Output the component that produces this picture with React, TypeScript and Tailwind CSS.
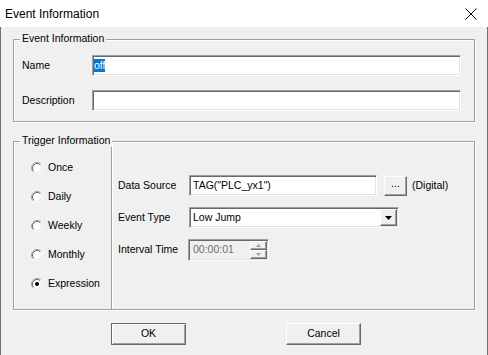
import React from 'react';

const sunken =
  'border border-t-[#a0a0a0] border-l-[#a0a0a0] border-r-white border-b-white shadow-[inset_1px_1px_0_#696969,inset_-1px_-1px_0_#e3e3e3]';
const raised =
  'border border-t-white border-l-white border-r-[#696969] border-b-[#696969] shadow-[inset_-1px_-1px_0_#a0a0a0] bg-[#f0f0f0]';

const Group: React.FC<{ title: string; className: string; children: React.ReactNode }> = ({ title, className, children }) => (
  <div className={`relative border border-[#a0a0a0] shadow-[inset_1px_1px_0_#fff,1px_1px_0_#fff] ${className}`}>
    <span className="absolute -top-[8px] left-[6px] bg-[#f0f0f0] px-[2px] leading-[13px]">{title}</span>
    {children}
  </div>
);

const Radio: React.FC<{ label: string; checked?: boolean }> = ({ label, checked }) => (
  <div className="flex h-[29px] items-center">
    <svg width="12" height="12" viewBox="0 0 12 12" className="shrink-0">
      <circle cx="6" cy="6" r="5" fill="#fff" />
      <path d="M2.11 9.89A5.5 5.5 0 0 1 9.89 2.11" fill="none" stroke="#a0a0a0" />
      <path d="M9.89 2.11A5.5 5.5 0 0 1 2.11 9.89" fill="none" stroke="#fff" />
      <path d="M2.82 9.18A4.5 4.5 0 0 1 9.18 2.82" fill="none" stroke="#696969" />
      <path d="M9.18 2.82A4.5 4.5 0 0 1 2.82 9.18" fill="none" stroke="#e3e3e3" />
      {checked && <circle cx="6" cy="6" r="2" fill="#000" />}
    </svg>
    <span className="ml-[5px]">{label}</span>
  </div>
);

export default function App() {
  return (
    <div className="flex h-[355px] w-[488px] flex-col font-['Liberation_Sans',Arial,sans-serif] text-[10.5px] text-black">
      {/* title bar */}
      <div className="flex h-[27px] shrink-0 items-center bg-white pl-[5px] text-[12px]">
        <span>Event Information</span>
        <svg width="12" height="12" viewBox="0 0 12 12" className="ml-auto mr-[11px]">
          <path d="M0.5 0.5L11.5 11.5M11.5 0.5L0.5 11.5" stroke="#000" strokeWidth="1" />
        </svg>
      </div>

      <div className="flex flex-1 flex-col border-x border-[#707070] bg-[#f0f0f0]">
        <Group title="Event Information" className="ml-[12px] mt-[12px] h-[83px] w-[462px]">
          <div className="flex flex-col gap-[14px] pl-[8px] pt-[15px]">
            <div className="flex h-[21px] items-center">
              <span className="w-[70px]">Name</span>
              <div className={`${sunken} flex h-[21px] w-[369px] items-center bg-white pl-[1px]`}>
                <span className="bg-[#0078d7] leading-[13px] text-white">off</span>
              </div>
            </div>
            <div className="flex h-[21px] items-center">
              <span className="w-[70px]">Description</span>
              <div className={`${sunken} h-[21px] w-[369px] bg-white`} />
            </div>
          </div>
        </Group>

        <Group title="Trigger Information" className="ml-[12px] mt-[19px] flex h-[169px] w-[462px]">
          <div className="flex w-[97px] flex-col pl-[17px] pt-[11px]">
            <Radio label="Once" />
            <Radio label="Daily" />
            <Radio label="Weekly" />
            <Radio label="Monthly" />
            <Radio label="Expression" checked />
          </div>
          <div className="flex flex-1 flex-col border-l border-[#a0a0a0] pl-[6px] pt-[33px] shadow-[inset_1px_0_0_#fff]">
            <div className="flex h-[21px] items-center">
              <span className="w-[71px]">Data Source</span>
              <div className={`${sunken} flex h-[21px] w-[188px] items-center bg-white pl-[3px]`}>TAG("PLC_yx1")</div>
              <div className={`${raised} ml-[7px] flex h-[20px] w-[23px] items-center justify-center pb-[3px]`}>...</div>
              <span className="ml-[5px]">(Digital)</span>
            </div>
            <div className="mt-[11px] flex h-[21px] items-center">
              <span className="w-[71px]">Event Type</span>
              <div className={`${sunken} flex h-[21px] w-[210px] items-center bg-white pl-[3px] pr-[1px]`}>
                <span>Low Jump</span>
                <div className={`${raised} ml-auto flex h-[17px] w-[17px] items-center justify-center`}>
                  <svg width="7" height="4" viewBox="0 0 7 4">
                    <path d="M0 0H7L3.5 4Z" fill="#000" />
                  </svg>
                </div>
              </div>
            </div>
            <div className="mt-[11px] flex h-[22px] items-center">
              <span className="w-[70px]">Interval Time</span>
              <div className={`${sunken} flex h-[22px] w-[81px] items-center bg-[#f0f0f0] pl-[4px] pr-[1px] text-[#6d6d6d]`}>
                <span>00:00:01</span>
                <div className="ml-auto flex h-[18px] w-[17px] flex-col">
                  <div className={`${raised} flex h-[9px] items-center justify-center`}>
                    <svg width="5" height="3" viewBox="0 0 5 3">
                      <path d="M0 3H5L2.5 0Z" fill="#a0a0a0" />
                    </svg>
                  </div>
                  <div className={`${raised} flex h-[9px] items-center justify-center`}>
                    <svg width="5" height="3" viewBox="0 0 5 3">
                      <path d="M0 0H5L2.5 3Z" fill="#a0a0a0" />
                    </svg>
                  </div>
                </div>
              </div>
            </div>
          </div>
        </Group>

        <div className="ml-[110px] mt-[13px] flex gap-[100px]">
          <div className="flex h-[22px] w-[75px] items-center justify-center border border-[#696969] bg-[#f0f0f0] shadow-[inset_1px_1px_0_#fff,inset_-1px_-1px_0_#a0a0a0]">
            OK
          </div>
          <div className={`${raised} flex h-[22px] w-[75px] items-center justify-center`}>Cancel</div>
        </div>
      </div>
    </div>
  );
}
